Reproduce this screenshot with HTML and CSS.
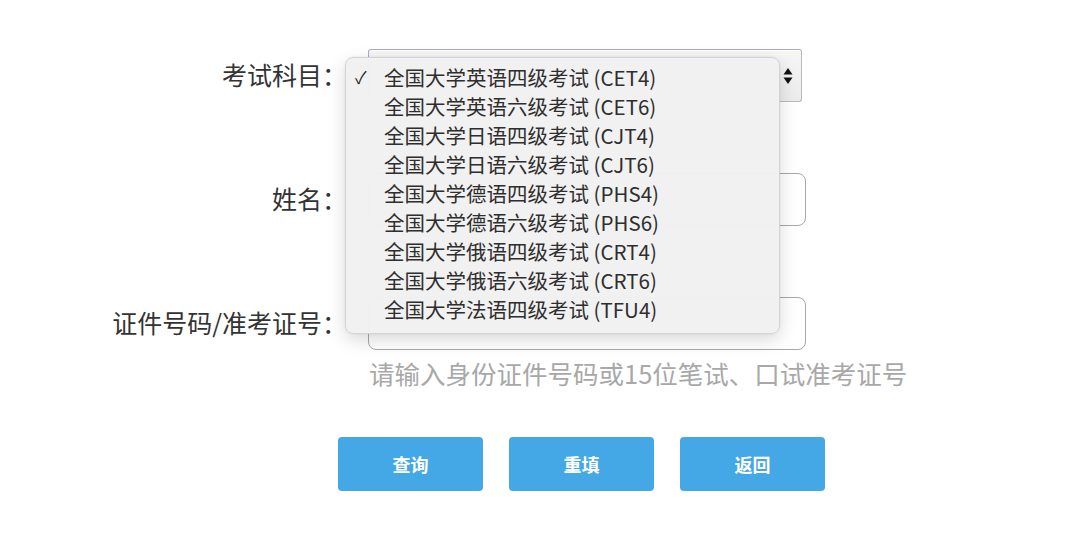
FILE: index.html
```html
<!DOCTYPE html>
<html lang="zh">
<head>
<meta charset="utf-8">
<link rel="stylesheet" href="styles.css">
</head>
<body>
<div class="form">
  <div class="row row-first">
    <label class="label">考试科目：</label>
    <div class="field">
      <div class="select">
        <span class="arrows"><svg width="10" height="18" viewBox="0 0 10 18"><path d="M5 1 L9.5 7.5 H0.5 Z M5 17 L9.5 10.5 H0.5 Z" fill="#111"/></svg></span>
      </div>
      <ul class="menu">
        <li class="item checked"><span class="check">✓</span>全国大学英语四级考试 (CET4)</li>
        <li class="item"><span class="check"></span>全国大学英语六级考试 (CET6)</li>
        <li class="item"><span class="check"></span>全国大学日语四级考试 (CJT4)</li>
        <li class="item"><span class="check"></span>全国大学日语六级考试 (CJT6)</li>
        <li class="item"><span class="check"></span>全国大学德语四级考试 (PHS4)</li>
        <li class="item"><span class="check"></span>全国大学德语六级考试 (PHS6)</li>
        <li class="item"><span class="check"></span>全国大学俄语四级考试 (CRT4)</li>
        <li class="item"><span class="check"></span>全国大学俄语六级考试 (CRT6)</li>
        <li class="item"><span class="check"></span>全国大学法语四级考试 (TFU4)</li>
      </ul>
    </div>
  </div>
  <div class="row">
    <label class="label">姓名：</label>
    <div class="field"><div class="input"></div></div>
  </div>
  <div class="row row-id">
    <label class="label">证件号码/准考证号：</label>
    <div class="field"><div class="input"></div></div>
  </div>
  <div class="hint">请输入身份证件号码或15位笔试、口试准考证号</div>
  <div class="buttons">
    <button class="btn">查询</button>
    <button class="btn">重填</button>
    <button class="btn">返回</button>
  </div>
</div>
</body>
</html>
```

FILE: styles.css
```css
* { box-sizing: border-box; }
html, body {
  margin: 0;
  padding: 0;
  background: #ffffff;
  font-family: "Noto Sans CJK SC", "Noto Sans", sans-serif;
  color: #333333;
}
.form {
  padding-top: 49px;
  display: flex;
  flex-direction: column;
}
.row {
  display: flex;
  align-items: center;
  gap: 21px;
  margin-bottom: 71px;
}
.row-id { margin-bottom: 6px; }
.label {
  width: 347px;
  text-align: right;
  font-size: 25px;
  line-height: 32px;
  color: #333;
  margin-top: -3px;
}
.field {
  position: relative;
}
.select {
  width: 434px;
  height: 53px;
  border: 1px solid #b9b9bd;
  border-top-color: #a9a8c8;
  border-left-color: #a8a6d4;
  border-radius: 3px;
  background: linear-gradient(#f6f6f6, #ececec);
  box-shadow: inset 0 1px 0 #ffffff;
  display: flex;
  align-items: center;
  justify-content: flex-end;
  padding-right: 8px;
}
.arrows { display: flex; }
.input {
  width: 438px;
  height: 53px;
  border: 1.5px solid #a8a8a8;
  border-radius: 8px;
  background: #fff;
}
.menu {
  position: absolute;
  left: -23px;
  top: 8px;
  width: 435px;
  margin: 0;
  padding: 4px 0 10px;
  list-style: none;
  background: rgba(241, 241, 241, 0.98);
  border: 1px solid #d4d4d4;
  border-radius: 8px;
  box-shadow: 0 6px 18px rgba(0, 0, 0, 0.15), 0 0 2px rgba(0, 0, 0, 0.08);
  z-index: 2;
}
.item {
  display: flex;
  align-items: center;
  height: 29px;
  font-size: 20.5px;
  color: #2e2e2e;
  white-space: nowrap;
}
.check {
  display: inline-block;
  width: 38px;
  padding-left: 9px;
  font-size: 17px;
  color: #222;
}
.hint {
  margin-left: 369px;
  font-size: 25.5px;
  line-height: 34px;
  color: #a8a8a8;
  margin-bottom: 47px;
}
.buttons {
  display: flex;
  gap: 26px;
  margin-left: 338px;
}
.btn {
  width: 145px;
  height: 54px;
  border: none;
  border-radius: 4px;
  background: #45a8e6;
  color: #ffffff;
  font-family: "Noto Sans CJK SC", sans-serif;
  font-size: 18px;
  font-weight: 700;
  padding: 0;
}
```
